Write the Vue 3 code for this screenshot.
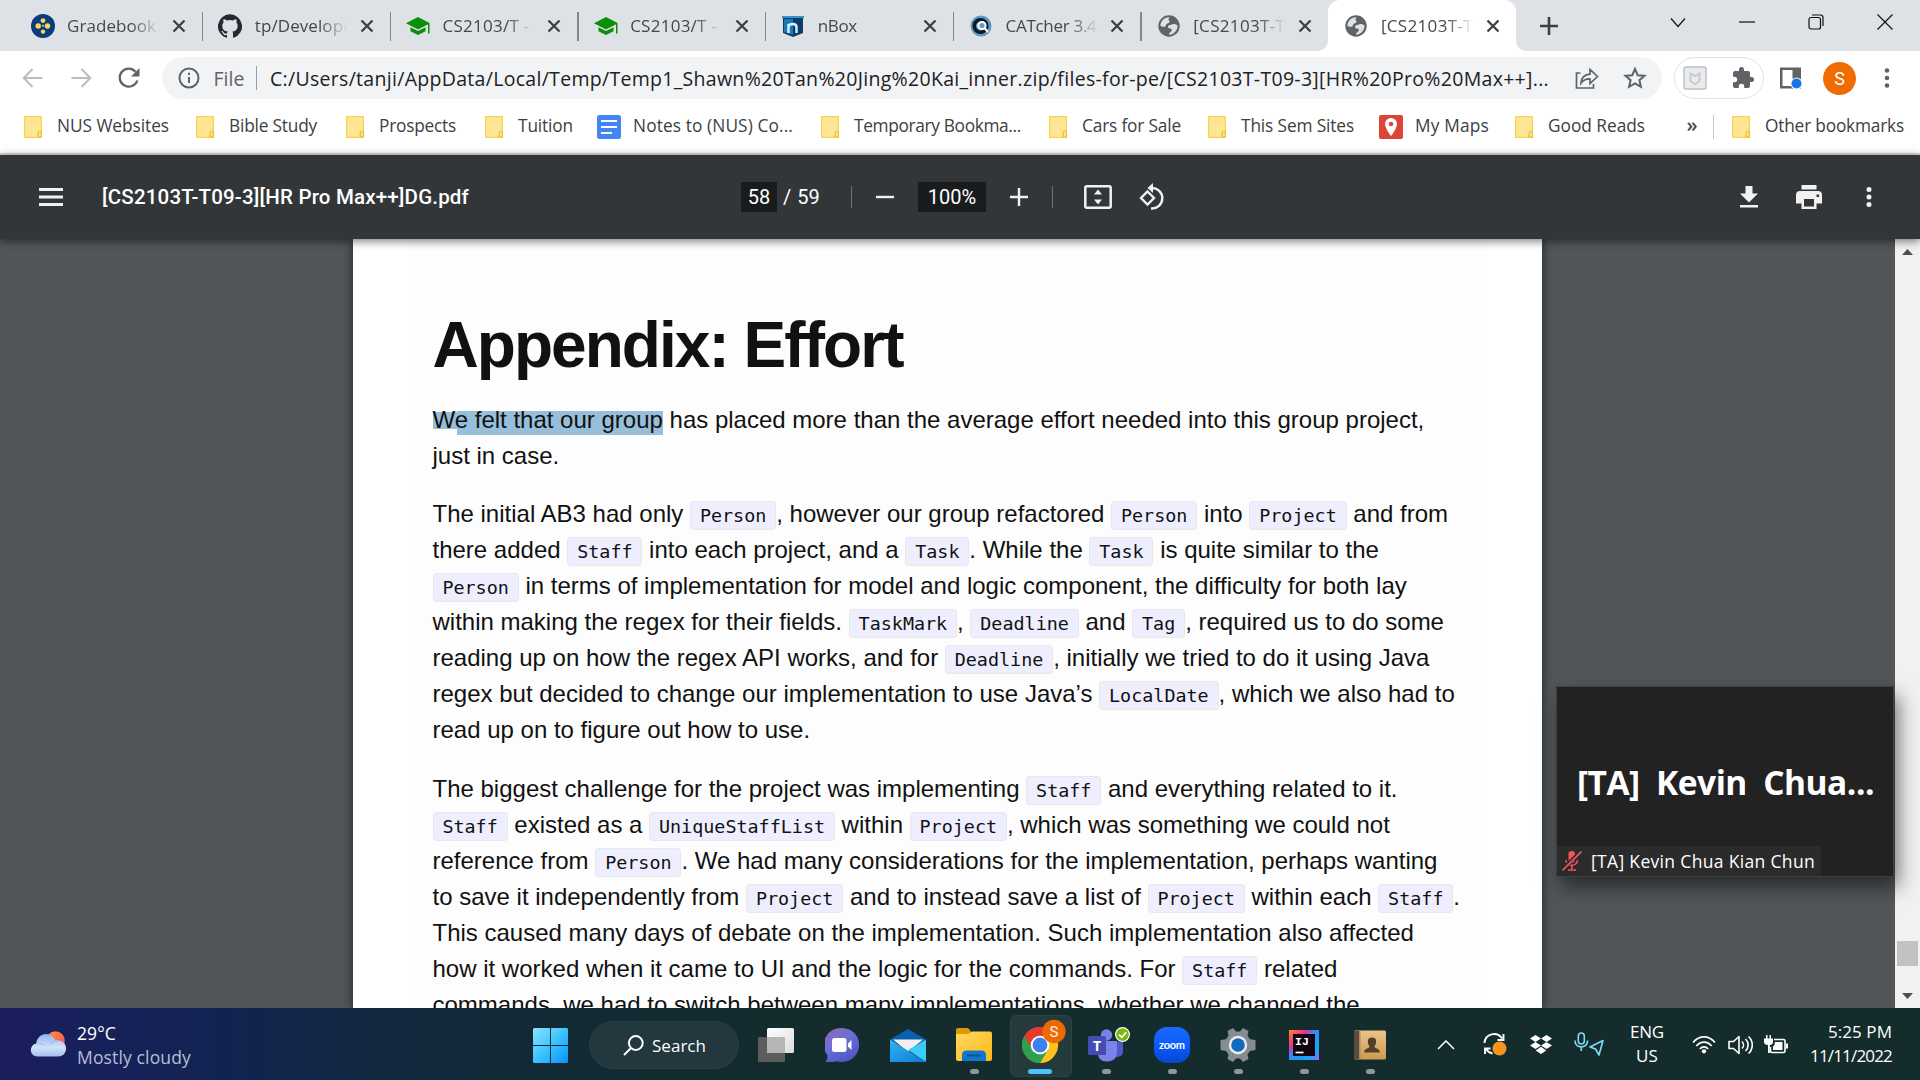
<script setup>
// Spreads a label over an exact width by adjusting its tracking.
const vFit = {
  mounted(el, { value }) {
    const natural = el.getBoundingClientRect().width
    const count = el.textContent.length
    el.style.letterSpacing = (value - natural) / count + 'px'
    el.style.width = value + 'px'
  },
}

const tabs = [
  { icon: 'canvas', title: 'Gradebook', w: 89 },
  { icon: 'github', title: 'tp/Develope', w: 98 },
  { icon: 'cap', title: 'CS2103/T -', w: 87 },
  { icon: 'cap', title: 'CS2103/T -', w: 87 },
  { icon: 'nbox', title: 'nBox', w: 39 },
  { icon: 'catcher', title: 'CATcher 3.4', w: 91 },
  { icon: 'globe', title: '[CS2103T-T', w: 92 },
  { icon: 'globe', title: '[CS2103T-T', w: 92, active: true },
]

const bookmarks = [
  { icon: 'folder', title: 'NUS Websites', w: 112, gap: 27 },
  { icon: 'folder', title: 'Bible Study', w: 88, gap: 29 },
  { icon: 'folder', title: 'Prospects', w: 77, gap: 29 },
  { icon: 'folder', title: 'Tuition', w: 55, gap: 24 },
  { icon: 'docs', title: 'Notes to (NUS) Co...', w: 160, gap: 28 },
  { icon: 'folder', title: 'Temporary Bookma...', w: 167, gap: 28 },
  { icon: 'folder', title: 'Cars for Sale', w: 99, gap: 27 },
  { icon: 'folder', title: 'This Sem Sites', w: 113, gap: 25 },
  { icon: 'maps', title: 'My Maps', w: 74, gap: 26 },
  { icon: 'folder', title: 'Good Reads', w: 97, gap: 0 },
]

const paragraphs = [
  [
    'The initial AB3 had only `Person`, however our group refactored `Person` into `Project` and from',
    'there added `Staff` into each project, and a `Task`. While the `Task` is quite similar to the',
    '`Person` in terms of implementation for model and logic component, the difficulty for both lay',
    'within making the regex for their fields. `TaskMark`, `Deadline` and `Tag`, required us to do some',
    'reading up on how the regex API works, and for `Deadline`, initially we tried to do it using Java',
    'regex but decided to change our implementation to use Java’s `LocalDate`, which we also had to',
    'read up on to figure out how to use.',
  ],
  [
    'The biggest challenge for the project was implementing `Staff` and everything related to it.',
    '`Staff` existed as a `UniqueStaffList` within `Project`, which was something we could not',
    'reference from `Person`. We had many considerations for the implementation, perhaps wanting',
    'to save it independently from `Project` and to instead save a list of `Project` within each `Staff`.',
    'This caused many days of debate on the implementation. Such implementation also affected',
    'how it worked when it came to UI and the logic for the commands. For `Staff` related',
    'commands, we had to switch between many implementations, whether we changed the',
  ],
].map((lines) => lines.map((line) => line.split('`')))
</script>

<template>
  <div class="screen">
    <!-- Tab strip -->
    <header class="tabstrip">
      <div v-for="(tab, i) in tabs" :key="i" class="tab" :class="{ active: tab.active, last: i === 6 }">
        <svg class="fav" viewBox="0 0 24 24">
          <template v-if="tab.icon === 'canvas'">
            <circle cx="12" cy="12" r="12" fill="#0b3d7c" />
            <g fill="#fbd75a"><circle cx="12" cy="6.6" r="2.4" /><circle cx="7.2" cy="12" r="2.7" /><circle cx="16.5" cy="12" r="2.7" /><circle cx="12" cy="17.6" r="2.2" /><circle cx="12" cy="11.8" r="1" /></g>
          </template>
          <path v-else-if="tab.icon === 'github'" fill="#24292f" d="M12 .3a12 12 0 0 0-3.8 23.4c.6.1.8-.3.8-.6v-2c-3.3.7-4-1.6-4-1.6-.6-1.4-1.4-1.8-1.4-1.8-1-.7.1-.7.1-.7 1.2 0 1.9 1.2 1.9 1.2 1 1.8 2.8 1.3 3.5 1 0-.8.4-1.3.7-1.6-2.7-.3-5.5-1.3-5.500-6 0-1.2.5-2.3 1.3-3.1-.2-.4-.6-1.6 0-3.2 0 0 1-.3 3.4 1.2a11.5 11.5 0 0 1 6 0c2.3-1.5 3.3-1.2 3.3-1.2.6 1.6.2 2.8 0 3.2.9.8 1.3 1.9 1.3 3.2 0 4.6-2.8 5.6-5.5 5.9.5.4.9 1 .9 2.2v3.3c0 .3.1.7.8.6A12 12 0 0 0 12 .3" />
          <g v-else-if="tab.icon === 'cap'" fill="#0a8f08">
            <path d="M12 3 24 9.300 12 15.500 0 9.300z" /><path d="M4.500 13.200 12 17l7.500-3.800v4L12 21l-7.500-3.800z" /><path d="M22 10h1.500v9.500H22z" />
          </g>
          <template v-else-if="tab.icon === 'nbox'">
            <path fill="#0d3d66" d="M1 2h22l-1 3v14l-10 4L2 19V5z" /><path fill="#1c78b8" d="M3 5h9v16l-9-3z" />
            <path fill="none" stroke="#d8f0ff" stroke-width="2.4" d="M7.500 19v-9M7.500 13c0-4 8-4 8 0v6" /><path fill="#2f97d0" d="M1 2h22l-.6 2H1.600z" />
          </template>
          <template v-else-if="tab.icon === 'catcher'">
            <circle cx="12" cy="12" r="10.5" fill="#5c9bc5" /><circle cx="11.5" cy="12" r="6.3" fill="none" stroke="#101820" stroke-width="3.5" />
            <circle cx="13" cy="11.5" r="3.6" fill="#5c9bc5" stroke="#fff" stroke-width="2" /><path stroke="#fff" stroke-width="2.2" d="m15.500 14 3.500 4" />
          </template>
          <template v-else>
            <circle cx="12" cy="12" r="10.7" fill="#5f6368" />
            <path fill="#dee1e6" d="M20.500 11.500c-1-1.500-3-1.500-4.500-1.500-1 0-1.500 1.200-3 1-1.200 0-2 1-2 2s1.200 1.500 2.500 1.500 1.500 1.200 1 2.500c-.6 1.500-2.500 1.200-2.500 3.800 5-.4 8.700-4.300 8.500-9.300zM12.500 3.300C8 3 3.800 6.500 3.300 11.500c1 1.200 2.500 1.500 4.200 1.300 1.500-.2 1-1.800 2-2.800s2.500-.5 3-2c.4-1.200-1.300-1.500-1-2.700.1-.8 1-1 1-2z" />
          </template>
        </svg>
        <div class="tabtitle"><span v-fit="tab.w" class="fit">{{ tab.title }}</span></div>
        <svg class="x" viewBox="0 0 14 14"><path d="m1.500 1.500 11 11m0-11-11 11" /></svg>
      </div>
      <svg class="newtab" viewBox="0 0 18 18"><path stroke="#3c4043" stroke-width="2.6" d="M9 0v18M0 9h18" /></svg>
      <div class="winbtns">
        <svg viewBox="0 0 16 16"><path d="m1 4.500 7 8 7-8" /></svg>
        <svg viewBox="0 0 16 16"><path d="M0 8h16" /></svg>
        <svg viewBox="0 0 16 16"><rect x="1" y="3.5" width="11.5" height="11.5" rx="2" /><path d="M4 1h8.500q2.500 0 2.500 2.500V12" /></svg>
        <svg viewBox="0 0 16 16"><path d="m.5.5 15 15m0-15-15 15" /></svg>
      </div>
    </header>

    <!-- Address bar -->
    <div class="toolbar">
      <svg class="nav" viewBox="0 0 24 24"><path d="M21.500 12H3M11.500 3 2.700 12l8.800 9" stroke="#babcbe" /></svg>
      <svg class="nav" viewBox="0 0 24 24"><path d="M2.500 12H21M12.500 3l8.800 9-8.800 9" stroke="#babcbe" /></svg>
      <svg class="nav" viewBox="0 0 24 24"><path d="M20.300 14.500A9 9 0 1 1 18.500 5.700" stroke="#5f6368" stroke-width="2.3" /><path d="M22.500 2v8.500H14z" fill="#5f6368" /></svg>
      <div class="omnibox">
        <svg class="info" viewBox="0 0 22 22"><circle cx="11" cy="11" r="9.5" /><path d="M11 10v6M11 5.700V8" /></svg>
        <span v-fit="31" class="fit scheme">File</span>
        <i class="omnisep"></i>
        <span v-fit="1279" class="fit url">C:/Users/tanji/AppData/Local/Temp/Temp1_Shawn%20Tan%20Jing%20Kai_inner.zip/files-for-pe/[CS2103T-T09-3][HR%20Pro%20Max++]...</span>
        <svg class="share" viewBox="0 0 24 24"><path d="M5.500 7H1.500v15h17v-4M6 17c.5-5.500 3.500-8.500 9-8.800V3.500l7.500 7-7.500 7v-4.700c-4-.1-6.800 1-9 4.200z" /></svg>
        <svg class="star" viewBox="0 0 24 24"><path d="m12 3 2.700 6.200 6.800.6-5.100 4.400 1.500 6.600-5.900-3.500-5.900 3.500 1.500-6.600-5.100-4.400 6.800-.6z" /></svg>
      </div>
      <div class="extpill">
        <svg width="24" height="24" viewBox="0 0 24 24"><rect x="1" y="1" width="22" height="22" rx="2" fill="#e9ebed" stroke="#bdc1c6" stroke-width="1.5" /><path d="M7.500 7.500 12 10l4.500-2.500v7.500L12 18l-4.500-3z" fill="none" stroke="#c8cbcf" stroke-width="2" /></svg>
        <svg width="24" height="24" viewBox="0 0 24 24"><path fill="#5f6368" d="M20.500 11H19V7a2 2 0 0 0-2-2h-4V3.500a2.500 2.500 0 0 0-5 0V5H4a2 2 0 0 0-2 2v3.800h1.500a2.700 2.700 0 0 1 0 5.400H2V20c0 1.100.9 2 2 2h3.800v-1.500a2.700 2.700 0 0 1 5.400 0V22H17a2 2 0 0 0 2-2v-4h1.500a2.500 2.500 0 0 0 0-5z" /></svg>
      </div>
      <svg class="side" viewBox="0 0 24 24"><path fill="#5f6368" fill-rule="evenodd" d="M1 1.500h21v21H1zM3.500 4v16h10V4z" /><circle cx="17.5" cy="17.5" r="6" fill="#fff" /><circle cx="17.5" cy="17.5" r="5" fill="#1a73e8" /></svg>
      <div class="avatar">S</div>
      <svg class="kebab" viewBox="0 0 6 22"><g fill="#5f6368"><circle cx="3" cy="3.5" r="2.3" /><circle cx="3" cy="11" r="2.3" /><circle cx="3" cy="18.5" r="2.3" /></g></svg>
    </div>

    <!-- Bookmarks -->
    <nav class="bookmarks">
      <div v-for="b in bookmarks" :key="b.title" class="bm" :style="{ marginRight: b.gap + 'px' }">
        <svg v-if="b.icon === 'folder'" class="folder" viewBox="0 0 18 22"><path d="M.7.7h16.600v20.600H.7z" fill="#ffe694" stroke="#f8d44c" stroke-width="1.3" /><path d="M14.200 21v-4q0-2 1.600-2t1.600 2v4z" fill="#ffe694" stroke="#e9bd33" stroke-width="1.2" /></svg>
        <svg v-else-if="b.icon === 'docs'" class="bmicon" viewBox="0 0 24 24"><rect width="24" height="24" rx="2.5" fill="#4285f4" /><path stroke="#fff" stroke-width="2.2" d="M4 6h16M4 12h16M4 18h11" /></svg>
        <svg v-else class="bmicon" viewBox="0 0 24 24"><rect width="24" height="24" rx="2" fill="#db4437" /><path fill="#fff" d="M12 3a6 6 0 0 0-6 6c0 4.500 6 12 6 12s6-7.500 6-12a6 6 0 0 0-6-6" /><circle cx="12" cy="9" r="2.3" fill="#db4437" /></svg>
        <span v-fit="b.w" class="fit">{{ b.title }}</span>
      </div>
      <span class="more">»</span>
      <i class="bmsep"></i>
      <div class="bm">
        <svg class="folder" viewBox="0 0 18 22"><path d="M.7.7h16.600v20.600H.7z" fill="#ffe694" stroke="#f8d44c" stroke-width="1.3" /><path d="M14.200 21v-4q0-2 1.600-2t1.600 2v4z" fill="#ffe694" stroke="#e9bd33" stroke-width="1.2" /></svg>
        <span v-fit="139" class="fit">Other bookmarks</span>
      </div>
    </nav>

    <!-- PDF viewer toolbar -->
    <div class="pdfbar">
      <div class="pdfleft">
        <svg width="24" height="18" viewBox="0 0 24 18"><path stroke="#f1f1f1" stroke-width="3" d="M0 1.500h24M0 9h24M0 16.500h24" /></svg>
        <span v-fit="367" class="fit pdftitle">[CS2103T-T09-3][HR Pro Max++]DG.pdf</span>
      </div>
      <div class="pdfmid">
        <span class="box pagebox">58</span><span class="slash">/</span><span class="total">59</span>
        <i></i>
        <svg width="18" height="18" viewBox="0 0 18 18"><path stroke="#f1f1f1" stroke-width="2.4" d="M0 9h18" /></svg>
        <span class="box zoombox">100%</span>
        <svg width="18" height="18" viewBox="0 0 18 18"><path stroke="#f1f1f1" stroke-width="2.4" d="M0 9h18M9 0v18" /></svg>
        <i class="sep2"></i>
        <svg class="fitpage" width="28" height="24" viewBox="0 0 28 24"><rect x="1.3" y="1.3" width="25.4" height="21.4" rx="1.5" fill="none" stroke="#f1f1f1" stroke-width="2.5" /><path fill="#f1f1f1" d="m14 4.500 4 5h-8zM14 19.500l4-5h-8z" /></svg>
        <svg width="28" height="28" viewBox="0 0 28 28"><g fill="none" stroke="#f1f1f1" stroke-width="2.4"><path d="m9.500 8.500 6.500 6.500-6.500 6.500L3 15z" /><path d="M13 5a10.300 10.300 0 1 1 0 20.500" /></g><path fill="#f1f1f1" d="M15 0v10l-5.500-5z" /></svg>
      </div>
      <div class="pdfright">
        <svg width="18" height="22" viewBox="0 0 18 22"><path fill="#f1f1f1" d="M5.500 0h7v7.500H18l-9 9-9-9h5.500zM0 19h18v2.500H0z" /></svg>
        <svg width="26" height="24" viewBox="0 0 26 24"><path fill="#f1f1f1" fill-rule="evenodd" d="M5.500 0h15v4.500h-15zM4 6h18a4 4 0 0 1 4 4v8.500h-5.500V24h-15v-5.500H0V10a4 4 0 0 1 4-4m4 8v7.500h10V14zm12.500-4.500v2.600h2.600V9.500z" /></svg>
        <svg width="6" height="22" viewBox="0 0 6 22"><g fill="#f1f1f1"><circle cx="3" cy="3.5" r="2.5" /><circle cx="3" cy="11" r="2.5" /><circle cx="3" cy="18.5" r="2.5" /></g></svg>
      </div>
    </div>

    <!-- Document -->
    <main class="viewer">
      <article class="page">
        <div class="sheet">
          <h1><span v-fit="470" class="fit">Appendix: Effort</span></h1>
          <p class="intro"><span class="line"><span class="sel">We felt that our group</span> has placed more than the average effort needed into this group project,</span><span class="line">just in case.</span></p>
          <p v-for="(lines, p) in paragraphs" :key="p">
            <span v-for="(parts, l) in lines" :key="l" class="line"><template v-for="(part, k) in parts" :key="k"><code v-if="k % 2">{{ part }}</code><template v-else>{{ part }}</template></template></span>
          </p>
        </div>
      </article>
      <aside class="scroll">
        <svg width="11" height="6" viewBox="0 0 11 6"><path fill="#505050" d="M0 6h11L5.500 0z" /></svg>
        <div class="thumb"></div>
        <svg width="11" height="6" viewBox="0 0 11 6"><path fill="#505050" d="M0 0h11L5.500 6z" /></svg>
      </aside>
    </main>

    <!-- Floating call participant -->
    <section class="call">
      <div class="bigname"><span v-fit="297" class="fit">[TA]&nbsp; Kevin&nbsp; Chua...</span></div>
      <div class="caption">
        <svg width="20" height="20" viewBox="0 0 20 20"><rect x="6.5" y="0" width="6.5" height="12" rx="3.2" fill="#f2545b" /><path d="M4 9c0 7 11.500 7 11.500 0M9.800 14v4M6 19h8" fill="none" stroke="#f2545b" stroke-width="1.6" /><path d="M0 19 19 .5" stroke="#2b2b2b" stroke-width="4" /><path d="M.5 19.500 19.500.5" stroke="#f2545b" stroke-width="1.6" /></svg>
        <span v-fit="224" class="fit">[TA] Kevin Chua Kian Chun</span>
      </div>
    </section>

    <!-- Taskbar -->
    <footer class="taskbar">
      <div class="weather">
        <svg width="36" height="26" viewBox="0 0 36 26">
          <defs>
            <linearGradient id="cl" x1="0" y1="0" x2="0" y2="1"><stop offset="0" stop-color="#8fb0f0" /><stop offset=".6" stop-color="#d3e1f8" /><stop offset="1" stop-color="#a5c0ee" /></linearGradient>
            <linearGradient id="su" x1="0" y1="0" x2="1" y2="1"><stop offset="0" stop-color="#ff9a2e" /><stop offset="1" stop-color="#f5486a" /></linearGradient>
          </defs>
          <circle cx="25.5" cy="9.5" r="9.3" fill="url(#su)" />
          <path fill="url(#cl)" d="M7 25.500a6.500 6.500 0 0 1-.8-12.900C7 6.500 11 3 16 3c4.500 0 8 2.800 9.200 6.500C32 8.500 36 12.500 36 17.500s-3.500 8-8 8z" />
          <path fill="none" stroke="#9db9ee" stroke-width="1.200" opacity=".8" d="M20 13.500c1.500-2.600 3.500-3.800 6-4M6.500 12.600c3.500-.5 6 .2 8 2" />
        </svg>
        <div><b v-fit="39" class="fit">29°C</b><em v-fit="114" class="fit">Mostly cloudy</em></div>
      </div>
      <div class="apps">
        <div class="cell start">
          <svg width="35" height="35" viewBox="0 0 35 35"><defs><linearGradient id="w" gradientUnits="userSpaceOnUse" x1="0" y1="0" x2="35" y2="35"><stop offset="0" stop-color="#8ce4ff" /><stop offset=".5" stop-color="#3cc4ff" /><stop offset="1" stop-color="#0a90f8" /></linearGradient></defs><path fill="url(#w)" d="M1 0h16v17H0V1zM18 0h16l1 1v16H18zM0 18h17v17H1l-1-1zM18 18h17v16l-1 1H18z" /></svg>
        </div>
        <div class="search">
          <svg width="21" height="21" viewBox="0 0 21 21"><circle cx="12.8" cy="8" r="6.9" /><path d="M8 13 1 20" /></svg>
          <span v-fit="54" class="fit">Search</span>
        </div>
        <div class="cell">
          <svg width="36" height="34" viewBox="0 0 36 34"><defs><linearGradient id="tv" x1="0" y1="0" x2="1" y2="1"><stop offset="0" stop-color="#fff" /><stop offset="1" stop-color="#dcdcdc" /></linearGradient></defs><rect x="0" y="9" width="27" height="25" rx="1.5" fill="#5d5d5d" /><rect x="9" y="0" width="27" height="25" rx="1.5" fill="url(#tv)" /><path fill="#b5b7b6" d="M9 9h18v16H9z" /></svg>
        </div>
        <div class="cell">
          <svg width="34" height="34" viewBox="0 0 34 34"><defs><linearGradient id="ch" x1="0" y1="0" x2=".6" y2="1"><stop offset="0" stop-color="#9a66b4" /><stop offset=".5" stop-color="#6a6fd6" /><stop offset="1" stop-color="#5058c8" /></linearGradient></defs><path fill="url(#ch)" d="M17 0a17 17 0 1 1-5 33.200c-3 .8-6 1-11.500.8 1.300-2 2-4 2-6.500A17 17 0 0 1 17 0" /><rect x="7" y="10" width="14.5" height="14" rx="2.5" fill="#fff" /><path fill="#fff" d="M23 15.500 26.500 12v10L23 18.500z" /></svg>
        </div>
        <div class="cell">
          <svg width="36" height="33" viewBox="0 0 36 33"><defs><linearGradient id="ml" x1="0" y1="0" x2="1" y2="1"><stop offset="0" stop-color="#33b4f0" /><stop offset="1" stop-color="#0f78d6" /></linearGradient></defs><path fill="#0a5fae" d="M0 10.500 18 0l18 10.500V14H0z" /><path fill="#f1f1f1" d="M3 10.500h30L18 23z" /><path fill="#38ccf6" d="M36 10.500V33L18 21z" /><path fill="url(#ml)" d="M0 10.500 36 33H0z" /></svg>
        </div>
        <div class="cell run">
          <svg width="36" height="34" viewBox="0 0 36 34"><defs><linearGradient id="fo" x1="0" y1="0" x2="1" y2="1"><stop offset="0" stop-color="#ffd765" /><stop offset="1" stop-color="#fdba14" /></linearGradient></defs><path fill="#dd9a06" d="M0 2Q0 0 2 0h9q2 0 4 4h3v6H0z" /><path fill="url(#fo)" d="M0 6h12l4-2.500h18q2 0 2 2V31q0 2-2 2H2q-2 0-2-2z" /><path fill="#1276cc" d="M6 33v-6q0-4.500 4.500-4.500h15Q30 22.500 30 27v6z" /><path stroke="#0a4f96" stroke-width="2" d="M11 27.500h14" /></svg>
        </div>
        <div class="cell run current">
          <svg width="44" height="44" viewBox="0 0 44 44">
            <circle cx="18" cy="26" r="18" fill="#e33b2e" />
            <path fill="#e33b2e" d="M2.400 17A18 18 0 0 1 33.600 17L18 17.500 10.500 31z" />
            <path fill="#fcc31e" d="M33.600 17A18 18 0 0 1 18 44l7.800-13.500L18 17z" />
            <path fill="#2ca24c" d="M2.400 17A18 18 0 0 0 18 44l8-13.500-8 4-8-4z" />
            <circle cx="18" cy="26" r="9.3" fill="#fff" /><circle cx="18" cy="26" r="7.4" fill="#3b82ee" />
            <circle cx="32" cy="12.5" r="11.7" fill="#ec6a06" />
            <text x="32" y="18" text-anchor="middle" font-family="Roboto" font-size="15" fill="#fff0df">S</text>
          </svg>
        </div>
        <div class="cell run">
          <svg class="teams" width="42" height="36" viewBox="0 0 42 36">
            <circle cx="18.5" cy="8" r="5.7" fill="#7b83eb" /><path fill="#5059c9" d="M27 15h8v10q0 5-8 5z" /><path fill="#7b83eb" d="M10 14h19v11q0 9-9.500 9.500T10 26z" />
            <rect y="9" width="18" height="19" rx="1.5" fill="#444db5" />
            <text x="9" y="23.5" text-anchor="middle" font-family="Open Sans" font-weight="700" font-size="14" fill="#fff">T</text>
            <circle cx="34.5" cy="7.5" r="7.5" fill="#fff" /><circle cx="34.5" cy="7.5" r="6.3" fill="#7ab80e" /><path d="m31 7.500 2.700 2.800 4.500-5" stroke="#fff" stroke-width="1.8" fill="none" />
          </svg>
        </div>
        <div class="cell run">
          <svg width="36" height="36" viewBox="0 0 36 36"><defs><linearGradient id="zm" x1="0" y1="0" x2="0" y2="1"><stop offset="0" stop-color="#1a6bff" /><stop offset=".6" stop-color="#0b57fa" /><stop offset="1" stop-color="#0846cc" /></linearGradient></defs><rect width="36" height="36" rx="13" fill="url(#zm)" /><text x="18" y="21.5" text-anchor="middle" textLength="26" font-family="Lato" font-weight="700" font-size="11" fill="#fff">zoom</text></svg>
        </div>
        <div class="cell run">
          <svg width="36" height="36" viewBox="0 0 36 36"><path fill="#868c93" d="m13 1 3 3.500h4L23 1l5.500 3-1 4.500 2.500 3.700 5.500.8v10l-5.500 1-2.500 3.500 1 4.500L23 35l-3-3.500h-4L13 35l-5.500-3 1-4.500L6 24l-5.500-1V13l5.500-.8 2.500-3.700-1-4.500z" /><circle cx="18" cy="18" r="9.2" fill="#ededed" /><circle cx="18" cy="18" r="6.8" fill="#0f6cbd" /></svg>
        </div>
        <div class="cell run">
          <svg width="30" height="30" viewBox="0 0 30 30"><defs><linearGradient id="ij" x1="0" y1="0" x2="1" y2="1"><stop offset="0" stop-color="#fc8a1e" /><stop offset=".3" stop-color="#e8318c" /><stop offset=".45" stop-color="#2f8af5" /><stop offset=".8" stop-color="#14a8f5" /><stop offset="1" stop-color="#b05cf0" /></linearGradient></defs><path fill="url(#ij)" d="M0 0h30v30H0z" /><path fill="#120410" d="M4 4h22v22H4z" /><path stroke="#fff" stroke-width="1.7" d="M6.500 22.500h8" /><text x="6" y="15" font-family="Liberation Mono" font-weight="700" font-size="11.5" fill="#fff">IJ</text></svg>
        </div>
        <div class="cell run">
          <svg width="32" height="30" viewBox="0 0 32 30"><defs><linearGradient id="bk" x1="0" y1="0" x2="0" y2="1"><stop offset="0" stop-color="#e9c48b" /><stop offset="1" stop-color="#cf9a4c" /></linearGradient></defs><rect y=".5" width="32" height="29" rx="1.5" fill="url(#bk)" /><path fill="#5d4a3f" d="M0 1h5v28H0z" /><path fill="#a98a66" d="M5 1h1.500v28H5z" /><path fill="#54402a" d="M18 7.500c5 0 5 5 2.500 9 0 2 5.500 2 5.500 6H10c0-4 5.500-4 5.500-6-2.500-4-2.500-9 2.500-9" /></svg>
        </div>
      </div>
      <div class="tray">
        <svg class="t-up" width="18" height="10" viewBox="0 0 18 10"><path d="m1 9 8-8 8 8" fill="none" stroke="#fff" stroke-width="1.5" /></svg>
        <svg class="t-sync" width="25" height="25" viewBox="0 0 25 25"><g fill="none" stroke="#fff" stroke-width="1.9"><path d="M2.500 11A9.500 9.500 0 0 1 20 6.500M21.500 2v6h-6M10.500 21.500A9.500 9.500 0 0 1 4 17M3 22v-5.500h5.500" /></g><circle cx="17.5" cy="16.5" r="7" fill="#f7941d" /></svg>
        <svg class="t-drop" width="22" height="20" viewBox="0 0 22 20"><path fill="#fff" d="m5.500 0 5.500 3.500L5.500 7 0 3.500zM16.500 0 22 3.500 16.500 7 11 3.500zM5.500 7l5.500 3.500L5.500 14 0 10.500zM16.500 7l5.500 3.500-5.500 3.500-5.500-3.500zM11 11.800l5.300 3.600L11 19l-5.300-3.600z" /></svg>
        <svg class="t-mic" width="31" height="25" viewBox="0 0 31 25"><g fill="none" stroke="#7fdcf5" stroke-width="1.6"><rect x="4.3" y="1" width="6" height="11" rx="3" /><path d="M1 8.500c0 8.500 12.600 8.500 12.600 0M7.300 15v4" /><path d="M29 8.500 25 23l-3.500-6-5.500-2z" stroke-linejoin="round" /></g></svg>
        <div class="lang"><b v-fit="34" class="fit">ENG</b><b v-fit="22" class="fit">US</b></div>
        <svg class="t-wifi" width="24" height="19" viewBox="0 0 24 19"><g fill="none" stroke="#fff" stroke-width="1.7"><path d="M1 7.500c6.500-7.500 15.500-7.500 22 0M4.300 11c4.500-5.300 11-5.300 15.400 0M7.800 14c2.600-2.800 5.800-2.800 8.400 0" /></g><circle cx="12" cy="16.3" r="2.1" fill="#fff" /></svg>
        <svg class="t-vol" width="25" height="20" viewBox="0 0 25 20"><g fill="none" stroke="#fff" stroke-width="1.6" stroke-linejoin="round"><path d="M1 6.500h4.500L11 1.500v17l-5.500-5H1zM14 6.500c2 2 2 5 0 7M17.500 4c3.500 3.300 3.500 8.700 0 12M20.500 1.500c5 4.500 5 12.500 0 17" /></g></svg>
        <svg class="t-bat" width="24" height="19" viewBox="0 0 24 19"><path d="M10 4.500h9.500q1.500 0 1.500 1.500v10q0 1.500-1.500 1.500H8q-1.500 0-1.500-1.500v-4" fill="none" stroke="#fff" stroke-width="1.6" /><path fill="#fff" d="M11 7h7.500v8H9v-3.500q2-1.500 2-4.500M22 8.500h2v5h-2zM0 3.500h2V0h1.500v3.500h2V0H7v3.500h2V7q0 2.500-3.200 3v8H4v-8Q0 9.500 0 7z" /></svg>
        <div class="clock"><b v-fit="64" class="fit">5:25 PM</b><b v-fit="82" class="fit">11/11/2022</b></div>
      </div>
    </footer>
  </div>
</template>

<style>
body { margin: 0; overflow: hidden; background: #525659; }
</style>

<style scoped>
* { box-sizing: border-box; }
svg { display: block; flex: none; }
.screen { position: relative; width: 1920px; height: 1080px; display: flex; flex-direction: column; overflow: hidden; font-family: "Open Sans", "Noto Sans", sans-serif; color: #3c4043; }
.fit { display: inline-block; white-space: pre; flex: none; }

.tabstrip { height: 51px; flex: none; background: #dee1e6; display: flex; align-items: center; padding-left: 14.2px; font-size: 17px; }
.tab { width: 187.7px; height: 51px; flex: none; display: flex; align-items: center; padding: 1px 16px 0 16.4px; position: relative; }
.tab:not(.active):not(.last)::after { content: ""; position: absolute; right: -1.5px; top: 12px; height: 29px; width: 1.5px; background: #84888d; }
.tab.active { background: #fff; border-radius: 12px 12px 0 0; }
.tab.active::before, .tab.active::after { content: ""; position: absolute; bottom: 0; width: 10px; height: 10px; }
.tab.active::before { left: -10px; background: radial-gradient(circle at 0 0, transparent 9.5px, #fff 10px); }
.tab.active::after { right: -10px; background: radial-gradient(circle at 100% 0, transparent 9.5px, #fff 10px); }
.fav { width: 24px; height: 24px; margin-right: 12.5px; }
.tabtitle { width: 102px; line-height: 30px; padding-bottom: 1px; color: #44474b; mask-image: linear-gradient(90deg, #000 64px, transparent 92px); }
.x { width: 14px; height: 14px; margin-left: auto; }
.x path { stroke: #3c4043; stroke-width: 2.3; }
.newtab { width: 18px; height: 18px; margin-left: 24px; }
.winbtns { margin-left: auto; display: flex; gap: 53px; padding: 0 27px 8px 0; }
.winbtns svg { width: 16px; height: 16px; fill: none; stroke: #111; stroke-width: 1.2; }

.toolbar { height: 54px; flex: none; background: #fff; display: flex; align-items: center; padding-left: 21px; }
.nav { width: 24px; height: 24px; margin-right: 24px; fill: none; stroke-width: 2; }
.omnibox { width: 1500px; height: 42px; margin-left: -3px; border-radius: 21px; background: #f1f3f4; display: flex; align-items: center; padding-left: 16px; font-size: 19.5px; color: #202124; }
.info { width: 22px; height: 22px; fill: none; stroke: #5f6368; stroke-width: 2; margin-right: 13.5px; }
.scheme { color: #5f6368; }
.omnisep { width: 1.5px; height: 24px; background: #9aa0a6; margin: 0 13px 0 11px; }
.share, .star { width: 24px; height: 24px; fill: none; stroke: #5f6368; }
.share { margin-left: 26px; stroke-width: 1.7; }
.star { margin-left: 24px; stroke-width: 2; }
.extpill { width: 90px; height: 42px; margin-left: 12px; border: 1.5px solid #dfe1e5; border-radius: 21px; display: flex; align-items: center; padding-left: 7.5px; gap: 24px; flex: none; }
.side { width: 24px; height: 24px; margin-left: 15px; }
.avatar { width: 33px; height: 33px; border-radius: 50%; background: #ee6c02; color: #fff; margin-left: 20px; font: 18px/33px Roboto, sans-serif; text-align: center; flex: none; }
.kebab { width: 6px; height: 22px; margin-left: 28px; }

.bookmarks { height: 50px; flex: none; background: #fff; border-bottom: 2px solid #dadada; display: flex; align-items: center; padding: 0 0 5px 24px; font-size: 17.3px; }
.bm { display: flex; align-items: center; flex: none; }
.bm .fit { position: relative; top: -1px; }
.folder { width: 18px; height: 22px; margin-right: 15px; }
.bmicon { width: 24px; height: 24px; margin-right: 12px; }
.more { font-size: 20px; font-weight: 600; width: 12px; margin-left: auto; position: relative; top: -2px; color: #4a4d50; }
.bmsep { width: 1.5px; height: 24px; background: #c4c7ca; margin: 0 18px 0 14px; }
.bookmarks > .bm:last-child { margin-right: 16px; }

.pdfbar { height: 84px; flex: none; background: #323639; box-shadow: 0 2px 9px rgba(0, 0, 0, .55); position: relative; z-index: 2; display: flex; align-items: center; color: #fff; font-family: Roboto, sans-serif; font-size: 20px; }
.pdfleft { width: 741px; padding-left: 39px; display: flex; align-items: center; gap: 39px; }
.pdftitle { font-weight: 500; font-size: 20.5px; }
.pdfmid { flex: 1; display: flex; align-items: center; }
.box { height: 30px; line-height: 30px; background: #191b1c; text-align: center; }
.pagebox { width: 36px; }
.slash { margin-left: 6px; }
.total { margin-left: 6px; }
.pdfmid i { width: 1.3px; height: 22px; background: #707477; margin: 0 24px 0 31px; }
.zoombox { width: 68px; margin: 0 24px; }
.pdfmid .sep2 { margin: 0 31px 0 24px; }
.fitpage { margin-right: 26px; }
.pdfright { display: flex; align-items: center; gap: 38px; padding-right: 48px; }
.pdfright svg:last-child { margin-left: 6px; }

.viewer { height: 769px; flex: none; background: #525659; display: flex; overflow: hidden; }
.page { width: 1189px; margin-left: 353px; padding: 0 54px 0 57px; background: #fff; box-shadow: 0 0 9px 1px rgba(0, 0, 0, .5); flex: none; }
.sheet { height: 769px; background: #fdfdfd; padding: 74px 0 0 22.5px; overflow: hidden; color: #111; font-family: "Liberation Sans", Arial, sans-serif; }
h1 { margin: 0 0 25px; font-size: 64px; line-height: 64px; height: 64px; font-weight: 700; }
p { margin: 0 0 23px; font-size: 24px; line-height: 36px; }
.intro { margin-bottom: 22px; }
.line { display: block; height: 36px; white-space: pre; }
.sel { padding-bottom: 2px; background: linear-gradient(#97bfd9, #97bfd9) 0 6px / 24px 17px no-repeat, linear-gradient(#97bfd9, #97bfd9) 24px 5px / 100% 24px no-repeat; }
code { font: 18.4px/1 "DejaVu Sans Mono", monospace; background: #eef; border: 1px solid #e8e8ea; border-radius: 4px; padding: 3px 8.9px 2.6px; }
.scroll { width: 25px; margin-left: auto; background: #f1f1f1; display: flex; flex-direction: column; align-items: center; padding: 10px 0 9px; }
.thumb { width: 21px; height: 25px; background: #c1c1c1; margin: auto 0 27px; }

.call { position: absolute; z-index: 3; left: 1556px; top: 686px; width: 338px; height: 191px; background: #222; border: 1px solid #3d4144; box-shadow: 5px 10px 18px rgba(0, 0, 0, .5); display: flex; flex-direction: column; justify-content: flex-end; }
.bigname { height: 48px; margin: 0 0 40px 20px; font-size: 33.5px; line-height: 48px; font-weight: 700; color: #fff; }
.caption { width: 264px; height: 30px; background: #2b2b2b; color: #fff; display: flex; align-items: center; gap: 9px; padding-left: 5px; font-size: 17.5px; }

.taskbar { height: 72px; flex: none; position: relative; z-index: 4; display: flex; align-items: center; color: #fff; font-size: 17px; background: linear-gradient(90deg, #1b1c5c 0, #16215a 90px, #122350 230px, #11283f 380px, #122a33 560px, #142c2d 800px, #142c2c 100%); }
b, em { font-weight: 400; font-style: normal; line-height: 24px; }
.weather { width: 517px; padding-left: 30px; display: flex; align-items: center; gap: 11px; }
.weather div { display: flex; flex-direction: column; align-items: flex-start; padding-top: 1px; font-size: 17.5px; }
em { color: #b9bdd3; }
.apps { display: flex; align-items: center; flex: none; }
.cell { width: 66px; height: 72px; display: flex; align-items: center; justify-content: center; position: relative; padding-top: 2px; }
.start { margin-right: 6px; }
.search { width: 150px; height: 48px; margin: 2px 4px 0 0; border-radius: 24px; background: #22373e; border: 1px solid #2a3f45; display: flex; align-items: center; padding-left: 33px; gap: 8px; font-size: 17px; }
.search svg { fill: none; stroke: #fff; stroke-width: 2; }
.run::after { content: ""; position: absolute; left: 29px; top: 61px; width: 9px; height: 5px; border-radius: 3px; background: #8f9898; }
.current::before { content: ""; position: absolute; left: 3px; top: 7px; width: 60px; height: 60px; border-radius: 6px; background: #243a3b; border: 1px solid #2d4243; }
.current svg { position: relative; left: 4px; top: -4px; }
.current::after { left: 21px; width: 24px; background: #4cc2ff; }
.teams { position: relative; left: 3px; }
.tray { display: flex; align-items: center; flex: 1; padding-top: 1px; }
.t-up { margin-left: 34px; }
.t-sync { margin-left: 27px; }
.t-drop { margin-left: 23px; }
.t-mic { margin-left: 22px; }
.lang { display: flex; flex-direction: column; align-items: center; width: 34px; margin-left: 25px; }
.t-wifi { margin-left: 28px; }
.t-vol { margin-left: 12px; }
.t-bat { margin-left: 11px; }
.clock { margin-left: auto; padding-right: 28px; display: flex; flex-direction: column; align-items: flex-end; }
.lang, .clock { position: relative; top: -1px; }
</style>
